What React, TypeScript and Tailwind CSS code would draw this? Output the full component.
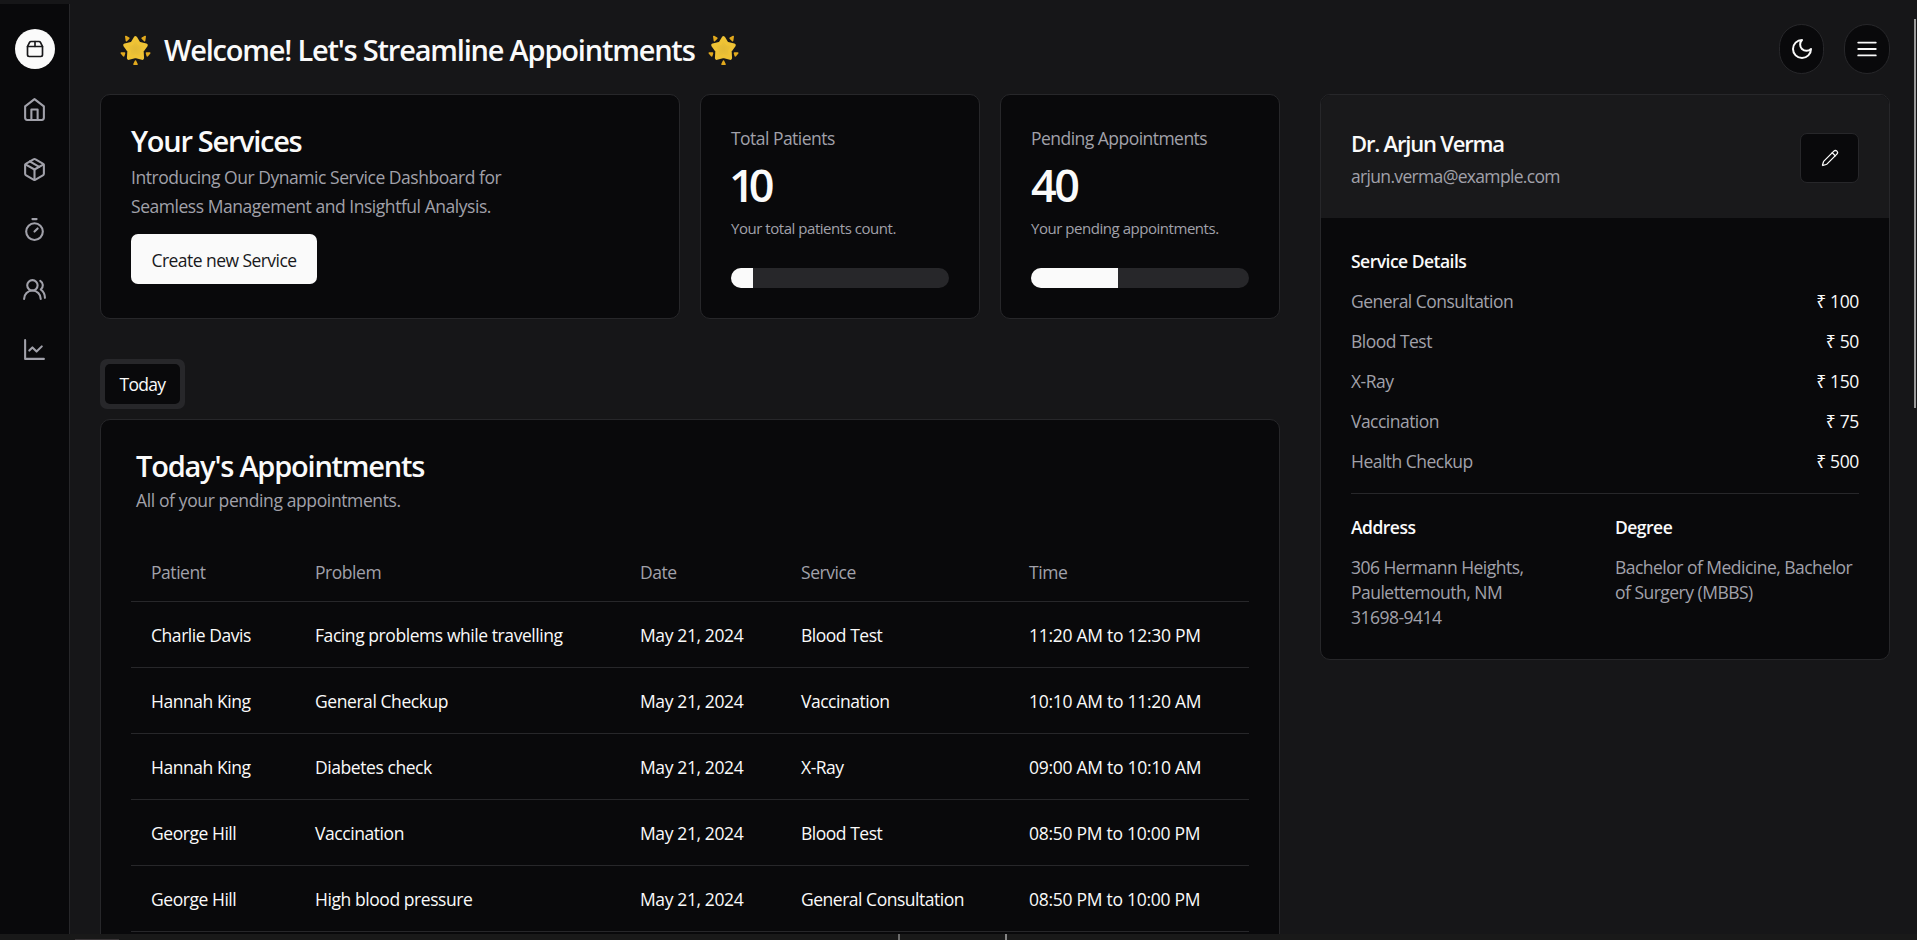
import React from "react";
import { Package2, Package, Timer, UsersRound, Pencil } from "lucide-react";

const services = [
  ["General Consultation", "₹ 100"],
  ["Blood Test", "₹ 50"],
  ["X-Ray", "₹ 150"],
  ["Vaccination", "₹ 75"],
  ["Health Checkup", "₹ 500"],
];

const rows = [
  ["Charlie Davis", "Facing problems while travelling", "May 21, 2024", "Blood Test", "11:20 AM to 12:30 PM"],
  ["Hannah King", "General Checkup", "May 21, 2024", "Vaccination", "10:10 AM to 11:20 AM"],
  ["Hannah King", "Diabetes check", "May 21, 2024", "X-Ray", "09:00 AM to 10:10 AM"],
  ["George Hill", "Vaccination", "May 21, 2024", "Blood Test", "08:50 PM to 10:00 PM"],
  ["George Hill", "High blood pressure", "May 21, 2024", "General Consultation", "08:50 PM to 10:00 PM"],
];

const columnTracking = ["tracking-[-0.45px]", "tracking-[-0.43px]", "tracking-[-0.38px]", "tracking-[-0.48px]", "tracking-[-0.28px]"];

type IconProps = { className?: string };

const stroke = {
  viewBox: "0 0 24 24",
  fill: "none",
  stroke: "currentColor",
  strokeWidth: 2,
  strokeLinecap: "round" as const,
  strokeLinejoin: "round" as const,
};

const HomeIcon = ({ className }: IconProps) => (
  <svg {...stroke} className={className}>
    <path d="m3 9 9-7 9 7v11a2 2 0 0 1-2 2H5a2 2 0 0 1-2-2z" />
    <path d="M9 22V12h6v10" />
  </svg>
);

const ChartIcon = ({ className }: IconProps) => (
  <svg {...stroke} className={className}>
    <path d="M3 3v18h18" />
    <path d="m19 9-5 5-4-4-3 3" />
  </svg>
);

const MoonIcon = ({ className }: IconProps) => (
  <svg {...stroke} className={className}>
    <path d="M12 3a6 6 0 0 0 9 9 9 9 0 1 1-9-9Z" />
  </svg>
);

const MenuIcon = ({ className }: IconProps) => (
  <svg viewBox="0 0 15 15" className={className} fill="none" stroke="currentColor" strokeWidth="1.1" strokeLinecap="round">
    <path d="M2 3.5h11M2 7.5h11M2 11.5h11" />
  </svg>
);

const Star = () => (
  <svg viewBox="0 0 30 30" className="size-[31px] shrink-0">
    <defs>
      <radialGradient id="glow" cx="0.5" cy="0.55" r="0.6">
        <stop offset="0" stopColor="#e3ba35" />
        <stop offset="0.6" stopColor="#ecc136" />
        <stop offset="1" stopColor="#f8d34c" />
      </radialGradient>
    </defs>
    <path d="M15 2.8 18.2 8.2 25.2 9.8 21.2 15.4 21.6 22.4 15 20.6 8.4 22.4 8.8 15.4 4.8 9.8 11.8 8.2Z" fill="url(#glow)" stroke="#efc335" strokeWidth="3.4" strokeLinejoin="round" />
    <path d="M5.6 1.4 8.6 3 6.2 5.4ZM24.4 1.4 21.4 3 23.8 5.4ZM1.2 17.4 4.4 17.4 3.6 20.2ZM28.8 17.4 25.6 17.4 26.4 20.2ZM15 25.2 16.5 28.4 13.5 28.4Z" fill="#e2a91d" stroke="#e2a91d" strokeWidth="1.5" strokeLinejoin="round" />
  </svg>
);

type StatProps = { label: string; value: string; valueClass: string; note: string; percent: number };

function Stat({ label, value, valueClass, note, percent }: StatProps) {
  return (
    <section className="w-[280px] rounded-[10px] border border-[#27272a] bg-[#09090b] px-[30px] pt-[31px]">
      <p className="text-[17.5px] leading-[25px] tracking-[-0.53px] text-[#a1a1aa]">{label}</p>
      <p className={`mt-[11px] text-[45px] leading-[45px] font-semibold ${valueClass}`}>{value}</p>
      <p className="mt-[11px] text-[15px] leading-[20px] tracking-[-0.46px] text-[#a1a1aa]">{note}</p>
      <div className="mt-[30px] h-[20px] overflow-hidden rounded-full bg-[#27272a]">
        <div className="h-full bg-[#fafafa]" style={{ width: `${percent}%` }} />
      </div>
    </section>
  );
}

export default function App() {
  return (
    <div className="relative flex h-[940px] w-full flex-col overflow-hidden bg-[#161618] pt-1 font-['Open_Sans','Noto_Sans',sans-serif] text-[#fafafa]">
      <div className="flex min-h-0 flex-1 overflow-hidden">
        <nav className="flex w-[70px] shrink-0 flex-col items-center border-r border-[#27272a] bg-[#09090b] pt-[25px] text-[#a1a1aa]">
          <span className="flex size-10 items-center justify-center rounded-full bg-[#fafafa] text-[#18181b]"><Package2 className="size-5" /></span>
          <div className="mt-[28px] flex flex-col gap-[35px]">
            {[HomeIcon, Package, Timer, UsersRound, ChartIcon].map((Icon, i) => <Icon key={i} className="size-[25px]" />)}
          </div>
        </nav>

        <main className="min-w-0 flex-1 pr-[27px] pl-[30px]">
          <header className="flex h-[90px] items-center justify-between pl-[20px]">
            <h1 className="flex items-center pt-[2px] text-[29px] leading-[40px] font-semibold tracking-[-1.2px] whitespace-nowrap">
              <Star /><span className="mr-[13px] ml-[13px]">Welcome! Let's Streamline Appointments</span><Star />
            </h1>
            <div className="flex gap-[20px]">
              <button className="flex h-[50px] w-[45px] items-center justify-center rounded-full border border-[#27272a] bg-[#09090b]"><MoonIcon className="size-[24px]" /></button>
              <button className="flex h-[50px] w-[46px] items-center justify-center rounded-full border border-[#27272a] bg-[#09090b]"><MenuIcon className="size-[24px]" /></button>
            </div>
          </header>

          <div className="flex items-start gap-[40px]">
            <div className="w-[1180px] shrink-0">
              <div className="flex h-[225px] gap-[20px]">
                <section className="w-[580px] rounded-[10px] border border-[#27272a] bg-[#09090b] px-[30px] pt-[27px]">
                  <h2 className="text-[29px] leading-[37px] font-semibold tracking-[-1.3px]">Your Services</h2>
                  <p className="mt-[4px] text-[17.5px] leading-[29px] tracking-[-0.46px] text-[#a1a1aa]">Introducing Our Dynamic Service Dashboard for<br />Seamless Management and Insightful Analysis.</p>
                  <button className="mt-[13px] h-[50px] w-[186px] rounded-[7px] bg-[#fafafa] pt-[2px] text-[17.5px] tracking-[-0.55px] text-[#18181b]">Create new Service</button>
                </section>
                <Stat label="Total Patients" value="10" valueClass="-ml-[2px] tracking-[-6px]" note="Your total patients count." percent={10} />
                <Stat label="Pending Appointments" value="40" valueClass="tracking-[-2.5px]" note="Your pending appointments." percent={40} />
              </div>

              <div className="mt-[40px] flex h-[50px] w-[85px] rounded-[7px] bg-[#27272a] p-[5px]">
                <button className="flex-1 rounded-[5px] bg-[#09090b] text-[17.5px] tracking-[-0.7px]">Today</button>
              </div>

              <section className="mt-[10px] h-[700px] rounded-[10px] border border-[#27272a] bg-[#09090b] px-[30px] pt-[29px]">
                <h2 className="pl-[5px] text-[29px] leading-[34px] font-semibold tracking-[-1.22px]">Today's Appointments</h2>
                <p className="mt-px pl-[5px] text-[17.5px] leading-[32px] tracking-[-0.38px] text-[#a1a1aa]">All of your pending appointments.</p>
                <table className="mt-[26px] w-full table-fixed text-left text-[17.5px] leading-[25px]">
                  <colgroup><col className="w-[164px]" /><col className="w-[325px]" /><col className="w-[161px]" /><col className="w-[228px]" /><col /></colgroup>
                  <thead>
                    <tr className="h-[59px] border-b border-[#27272a] text-[#a1a1aa]">
                      {["Patient", "Problem", "Date", "Service", "Time"].map((h) => <th key={h} className="pt-[3px] pl-[20px] font-normal tracking-[-0.45px]">{h}</th>)}
                    </tr>
                  </thead>
                  <tbody>
                    {rows.map((r, i) => (
                      <tr key={i} className="h-[66px] border-b border-[#27272a]">
                        {r.map((c, j) => <td key={j} className={`pt-[2px] pl-[20px] whitespace-nowrap ${columnTracking[j]}`}>{c}</td>)}
                      </tr>
                    ))}
                  </tbody>
                </table>
              </section>
            </div>

            <aside className="h-[566px] min-w-0 flex-1 overflow-hidden rounded-[10px] border border-[#27272a] bg-[#09090b]">
              <div className="flex h-[123px] items-center justify-between bg-[#19191b] px-[30px]">
                <div className="pt-[3px]">
                  <h3 className="text-[22px] leading-[30px] font-semibold tracking-[-1.2px]">Dr. Arjun Verma</h3>
                  <p className="mt-[6px] text-[17.5px] leading-[25px] tracking-[-0.67px] text-[#a1a1aa]">arjun.verma@example.com</p>
                </div>
                <button className="mt-[2px] flex h-[50px] w-[59px] items-center justify-center rounded-[7px] border border-[#27272a] bg-[#09090b]"><Pencil className="size-[18px]" strokeWidth={1.7} /></button>
              </div>
              <div className="px-[30px] pt-[31px] text-[17.5px] leading-[25px] tracking-[-0.52px]">
                <h4 className="font-semibold">Service Details</h4>
                <ul className="mt-[15px] flex flex-col gap-[15px]">
                  {services.map(([n, p]) => <li key={n} className="flex justify-between"><span className="text-[#a1a1aa]">{n}</span><span className="tracking-[-0.35px]">{p}</span></li>)}
                </ul>
                <hr className="mt-[19px] border-[#27272a]" />
                <div className="mt-[21px] grid grid-cols-2 gap-[20px]">
                  <div><h4 className="font-semibold">Address</h4><p className="mt-[15px] text-[#a1a1aa]">306 Hermann Heights,<br />Paulettemouth, NM<br />31698-9414</p></div>
                  <div><h4 className="font-semibold">Degree</h4><p className="mt-[15px] whitespace-nowrap text-[#a1a1aa]">Bachelor of Medicine, Bachelor<br />of Surgery (MBBS)</p></div>
                </div>
              </div>
            </aside>
          </div>
        </main>
      </div>
      <div className="absolute top-[19px] right-px h-[389px] w-[2px] bg-[#9b9b9b]" />
      <footer className="flex h-[6px] shrink-0 bg-[#191919]">
        <span className="mt-[5px] ml-[75px] h-px w-[44px] bg-[#3a3638]" />
        <span className="ml-[779px] w-[2px] bg-[#6b6b6b]" />
        <span className="ml-[105px] w-[2px] bg-[#858585]" />
      </footer>
    </div>
  );
}
